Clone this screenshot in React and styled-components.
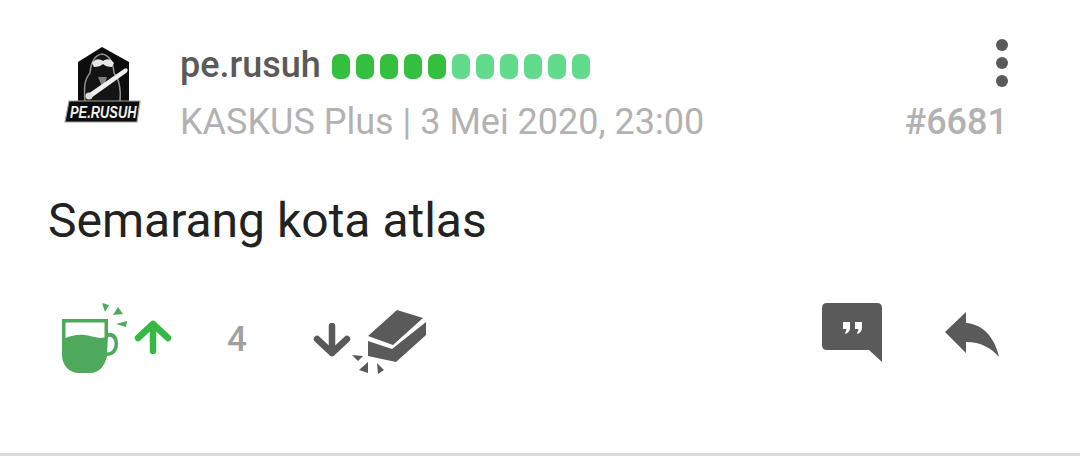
import React from "react";
import styled, { createGlobalStyle } from "styled-components";

const Global = createGlobalStyle`
  html, body { margin: 0; padding: 0; background: #fff; }
  body { font-family: Roboto, "Noto Sans", sans-serif; }
`;

const Post = styled.article`
  width: 1080px;
  height: 469px;
  box-sizing: border-box;
  padding-top: 39px;
  background: #fff;
  display: flex;
  flex-direction: column;
  overflow: hidden;
`;

const Header = styled.header`
  display: flex;
  align-items: flex-start;
  padding: 0 72px 0 64px;
`;

const Avatar = styled.svg`
  width: 78px;
  height: 80px;
  margin: 7px 39px 0 0;
  flex: none;
`;

const Info = styled.div`
  flex: 1;
  min-width: 0;
`;

const NameRow = styled.div`
  display: flex;
  align-items: center;
  height: 48px;
  margin-bottom: 15px;
`;

const Name = styled.span`
  font-size: 36px;
  font-weight: 500;
  line-height: 48px;
  color: #5a5a5a;
  margin: 3px 11px 0 -1px;
`;

const Pips = styled.div`
  display: flex;
  gap: 6px;
  margin-top: 7px;
`;

const Pip = styled.span`
  width: 18px;
  height: 25px;
  border-radius: 7px;
  background: ${(p) => (p.$on ? "#35bf3f" : "#62dc8c")};
`;

const Menu = styled.div`
  margin-left: auto;
  display: flex;
  flex-direction: column;
  gap: 6px;
`;

const Dot = styled.span`
  width: 12px;
  height: 12px;
  border-radius: 50%;
  background: #5a5a5a;
`;

const MetaRow = styled.div`
  display: flex;
  justify-content: space-between;
  align-items: center;
  height: 40px;
`;

const Meta = styled.span`
  font-size: 36px;
  line-height: 40px;
  color: #b2b2b2;
  margin-left: -1px;
`;

const PostNumber = styled.span`
  font-size: 36px;
  line-height: 40px;
  font-weight: 500;
  color: #b2b2b2;
`;

const Body = styled.p`
  margin: 52px 0 0 48px;
  font-size: 48px;
  line-height: 54px;
  color: #222;
`;

const Actions = styled.div`
  display: flex;
  align-items: flex-start;
  margin-top: 55px;
  padding-left: 62px;
`;

const Icon = styled.svg`
  display: block;
  flex: none;
  margin: ${(p) => p.$m || 0};
`;

const Count = styled.span`
  width: 38px;
  margin: 17px 0 0 46px;
  font-size: 35px;
  line-height: 40px;
  font-weight: 500;
  text-align: center;
  color: #a0a0a0;
`;

const Spacer = styled.div`
  flex: 1;
`;

const Divider = styled.div`
  height: 3px;
  margin-top: auto;
  margin-bottom: 13px;
  background: #dcdcdc;
`;

const PIPS = [1, 1, 1, 1, 1, 0, 0, 0, 0, 0, 0];

export default function App() {
  return (
    <>
      <Global />
      <Post>
        <Header>
          <Avatar viewBox="0 0 78 80">
            <path d="M38 1 L14 16 V56 H65 V16 Z" fill="#0c0c0c" />
            <path d="M21 56 C20 42 20 34 26 27 C27 16 31 9 38 8 C45 9 49 16 50 27 C56 34 57 44 56 56" fill="#141414" stroke="#909090" strokeWidth="1.500" />
            <path d="M30 21 L28 17 C32 12 36 13 39 15 C42 13 46 12 50 17 L48 21 C44 21 41 20 39 18 C37 20 34 21 30 21 Z" fill="#e6e6e6" />
            <path d="M34 31 H43 L39 43 Z" fill="#808080" />
            <path d="M24 48 L60 23 C61.500 22 63 22 63.500 23.500 C64 25 63 26 62 27 L27 52 Z" fill="#efefef" />
            <circle cx="25" cy="50" r="3.500" fill="#dedede" />
            <path d="M5 55 H76 L73 76 H1 Z" fill="#0c0c0c" stroke="#a0a0a0" strokeWidth="1.200" />
            <text transform="translate(6 72) scale(0.92 1.2)" fontFamily="'Liberation Sans', sans-serif" fontSize="14" fontWeight="700" fontStyle="italic" fill="#f2f2f2">PE.RUSUH</text>
          </Avatar>
          <Info>
            <NameRow>
              <Name>pe.rusuh</Name>
              <Pips>
                {PIPS.map((on, i) => (
                  <Pip key={i} $on={!!on} />
                ))}
              </Pips>
              <Menu>
                <Dot />
                <Dot />
                <Dot />
              </Menu>
            </NameRow>
            <MetaRow>
              <Meta>KASKUS Plus | 3 Mei 2020, 23:00</Meta>
              <PostNumber>#6681</PostNumber>
            </MetaRow>
          </Info>
        </Header>
        <Body>Semarang kota atlas</Body>
        <Actions>
          <Icon width="65" height="71" viewBox="0 0 65 71">
            <path d="M0 16 H46 V30 C52 29 56 33 56 41 C56 49 51 53 45 53 C43 62 38 70 28 70 H17 C7 70 0 62 0 52 Z" fill="#4fa95d" />
            <path d="M3.500 19.500 H42.500 V34.500 C36 36 30 33 23 32 C15 31 9 33 3.500 35 Z" fill="#fff" />
            <path d="M46 34 C50 33 52.500 36 52.500 41 C52.500 46 49 49.500 45 49.500 Z" fill="#fff" />
            <path d="M40 0 L47 2 L43 9 Z M51 12 L56 4 L61 11 Z M54 21 L65 18 L64 24 Z" fill="#4fa95d" />
          </Icon>
          <Icon width="38" height="34" viewBox="0 0 38 34" $m="17px 0 0 7px">
            <path d="M19 31 V4 M4 18 L19 4 L34 18" fill="none" stroke="#35b944" strokeWidth="6.500" strokeLinecap="round" strokeLinejoin="round" />
          </Icon>
          <Count>4</Count>
          <Icon width="38" height="34" viewBox="0 0 38 34" $m="20px 0 0 57px">
            <path d="M19 3 V30 M4 16 L19 30 L34 16" fill="none" stroke="#5a5a5a" strokeWidth="6.500" strokeLinecap="round" strokeLinejoin="round" />
          </Icon>
          <Icon width="75" height="70" viewBox="0 0 75 70" $m="5px 0 0 1px">
            <path d="M16 28 L45 2 L71 10 L41 37 Z M16 33 L40 41 L74 14 V27 L44 54 L16 48 Z" fill="#5a5a5a" />
            <path d="M0 47 L11 48 L6 53 Z M7 62 L16 54 L16 65 Z M25 55 L32 62 L26 66 Z" fill="#5a5a5a" />
          </Icon>
          <Spacer />
          <Icon width="60" height="60" viewBox="0 0 60 60">
            <path d="M5 0 H55 Q60 0 60 5 V59 L47 47 H5 Q0 47 0 42 V5 Q0 0 5 0 Z" fill="#5a5a5a" />
            <path d="M21 19 H28 V25 C28 28 26 30 23.500 31 L23 30 C24 28 24.500 27 24.500 26 H21 Z M33 19 H40 V25 C40 28 38 30 35.500 31 L35 30 C36 28 36.500 27 36.500 26 H33 Z" fill="#fff" />
          </Icon>
          <Icon width="54" height="46" viewBox="0 0 54 46" $m="9px 81px 0 63px">
            <path d="M0 20 L21 0 V11 C38 12 50 26 54 45 C46 36 36 30 21 30 V41 Z" fill="#5a5a5a" />
          </Icon>
        </Actions>
        <Divider />
      </Post>
    </>
  );
}
